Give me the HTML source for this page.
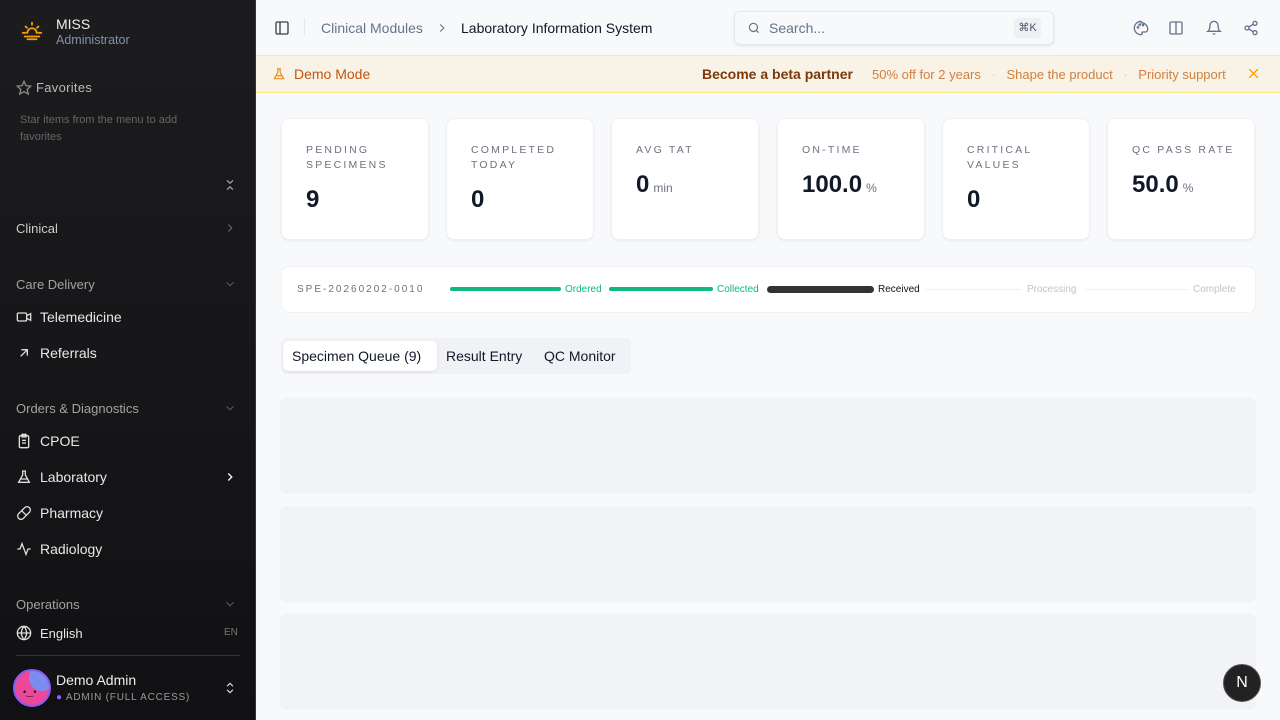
<!DOCTYPE html><html><head><style>
*{box-sizing:border-box;margin:0;padding:0}
body{width:1280px;height:720px;overflow:hidden;font-family:"Liberation Sans",sans-serif;background:#f8f9fb;position:relative}
.sb{position:absolute;left:0;top:0;width:256px;height:720px;background:linear-gradient(180deg,#1c1c1e,#111113);color:#e5e5e5;border-right:1px solid #333}
.a{position:absolute}
.sec{position:absolute;left:16px;font-size:13px;color:#a3a3a3}
.it{position:absolute;left:16px;font-size:14px;color:#e8e8e8;display:flex;align-items:center;gap:8px}
.it svg{width:16px;height:16px}
.cv{position:absolute;left:223px;width:14px;height:14px}
.card{position:absolute;top:118px;width:148px;height:122px;background:#fff;border-radius:8px;box-shadow:0 1px 2px rgba(0,0,0,.06);border:1px solid #eef0f3}
.lab{position:absolute;left:24px;top:24px;font-size:10.5px;letter-spacing:2.2px;color:#6b7280;line-height:15px}
.val{position:absolute;left:24px;font-size:24px;font-weight:bold;color:#111827}
.val small{font-size:12px;font-weight:normal;color:#6b7280;margin-left:4px}
.sk{position:absolute;left:280px;width:976px;height:96px;background:#f1f3f7;border-radius:6px}
.ico{position:absolute;top:20px;width:16px;height:16px}
</style></head><body>
<div class="sb">
<svg class="a" style="left:21px;top:20px" width="22" height="22" viewBox="0 0 24 24" fill="none" stroke="#f59e0b" stroke-width="2" stroke-linecap="round"><path d="M12 3v2M5 7l1.5 1.5M19 7l-1.5 1.5M2 14h3M19 14h3M7 14a5 5 0 0110 0M4 18h16M7 21h10"/></svg>
<div class="a" style="left:56px;top:16px;font-size:14px;color:#eee">MISS</div>
<div class="a" style="left:56px;top:33px;font-size:12.5px;color:#8391a7">Administrator</div>
<svg class="a" style="left:16px;top:80px" width="16" height="16" viewBox="0 0 24 24" fill="none" stroke="#888" stroke-width="2"><path d="M12 2l3 6.5 7 .8-5.2 4.8 1.5 7-6.3-3.6-6.3 3.6 1.5-7L2 9.3l7-.8z"/></svg>
<div class="a" style="left:36px;top:80px;font-size:13px;color:#bbb;letter-spacing:.3px">Favorites</div>
<div class="a" style="left:20px;top:112px;font-size:11px;color:#666;line-height:17px;width:200px">Star items from the menu to add favorites</div>
<svg class="cv" style="top:178px" viewBox="0 0 24 24" fill="none" stroke="#aaa" stroke-width="2"><path d="M7 4l5 5 5-5M7 20l5-5 5 5"/></svg>
<div class="sec" style="top:221px;color:#ccc">Clinical</div>
<svg class="cv" style="top:221px" viewBox="0 0 24 24" fill="none" stroke="#666" stroke-width="2"><path d="M9 6l6 6-6 6"/></svg>
<div class="sec" style="top:277px">Care Delivery</div>
<svg class="cv" style="top:277px" viewBox="0 0 24 24" fill="none" stroke="#555" stroke-width="2"><path d="M6 9l6 6 6-6"/></svg>
<div class="it" style="top:309px"><svg viewBox="0 0 24 24" fill="none" stroke="#ddd" stroke-width="2"><rect x="2" y="6" width="14" height="12" rx="2"/><path d="M16 10l6-3v10l-6-3"/></svg>Telemedicine</div>
<div class="it" style="top:345px"><svg viewBox="0 0 24 24" fill="none" stroke="#ddd" stroke-width="2"><path d="M7 17L17 7M8 7h9v9"/></svg>Referrals</div>
<div class="sec" style="top:401px">Orders &amp; Diagnostics</div>
<svg class="cv" style="top:401px" viewBox="0 0 24 24" fill="none" stroke="#555" stroke-width="2"><path d="M6 9l6 6 6-6"/></svg>
<div class="it" style="top:433px"><svg viewBox="0 0 24 24" fill="none" stroke="#ddd" stroke-width="2"><rect x="5" y="4" width="14" height="18" rx="2"/><path d="M9 2h6v4H9zM9 11h6M9 15h6"/></svg>CPOE</div>
<div class="it" style="top:469px"><svg viewBox="0 0 24 24" fill="none" stroke="#ddd" stroke-width="2"><path d="M9 3h6M10 3v6L4 20h16L14 9V3M7 15h10"/></svg>Laboratory</div>
<svg class="cv" style="top:470px" viewBox="0 0 24 24" fill="none" stroke="#eee" stroke-width="2.5"><path d="M9 6l6 6-6 6"/></svg>
<div class="it" style="top:505px"><svg viewBox="0 0 24 24" fill="none" stroke="#ddd" stroke-width="2"><path d="M10.5 20.5a5 5 0 01-7-7l10-10a5 5 0 017 7zM8.5 8.5l7 7"/></svg>Pharmacy</div>
<div class="it" style="top:541px"><svg viewBox="0 0 24 24" fill="none" stroke="#ddd" stroke-width="2"><path d="M2 12h4l3-8 6 16 3-8h4"/></svg>Radiology</div>
<div class="sec" style="top:597px">Operations</div>
<svg class="cv" style="top:597px" viewBox="0 0 24 24" fill="none" stroke="#555" stroke-width="2"><path d="M6 9l6 6 6-6"/></svg>
<div class="it" style="top:625px;font-size:13px"><svg viewBox="0 0 24 24" fill="none" stroke="#ddd" stroke-width="2"><circle cx="12" cy="12" r="10"/><path d="M2 12h20M12 2a15 15 0 010 20M12 2a15 15 0 000 20"/></svg>English</div>
<div class="a" style="left:224px;top:627px;font-size:10px;color:#777">EN</div>
<div class="a" style="left:16px;top:655px;width:224px;height:1px;background:#333"></div>
<div class="a" style="left:13px;top:669px;width:38px;height:38px;border-radius:50%;border:2px solid #8b5cf6;background:#ec4899;overflow:hidden"><div style="position:absolute;right:-6px;top:-6px;width:26px;height:26px;border-radius:50%;background:#7c8cf0"></div><div style="position:absolute;left:8px;top:16px;font-size:9px;color:#111">•‿•</div></div>
<div class="a" style="left:56px;top:672px;font-size:14px;color:#eee">Demo Admin</div>
<div class="a" style="left:56px;top:692px;font-size:10px;color:#999;letter-spacing:.8px"><span style="color:#8b5cf6">●</span> ADMIN (FULL ACCESS)</div>
<svg class="cv" style="top:681px" viewBox="0 0 24 24" fill="none" stroke="#ddd" stroke-width="2"><path d="M7 9l5-5 5 5M7 15l5 5 5-5"/></svg>
</div>
<div class="a" style="left:256px;top:0;width:1024px;height:56px;border-bottom:1px solid #e5e7eb;background:#f8f9fb"></div>
<svg class="a" style="left:274px;top:20px" width="16" height="16" viewBox="0 0 24 24" fill="none" stroke="#374151" stroke-width="2"><rect x="3" y="3" width="18" height="18" rx="2"/><path d="M9 3v18"/></svg>
<div class="a" style="left:304px;top:18px;width:1px;height:18px;background:#e5e7eb"></div>
<div class="a" style="left:321px;top:20px;font-size:14px;color:#64748b">Clinical Modules</div>
<svg class="a" style="left:435px;top:21px" width="14" height="14" viewBox="0 0 24 24" fill="none" stroke="#64748b" stroke-width="2"><path d="M9 6l6 6-6 6"/></svg>
<div class="a" style="left:461px;top:20px;font-size:14px;color:#111827">Laboratory Information System</div>
<div class="a" style="left:734px;top:11px;width:320px;height:34px;background:#f8f9fb;border:1px solid #e5e7eb;border-radius:6px;box-shadow:0 1px 3px rgba(0,0,0,.08)"></div>
<svg class="a" style="left:747px;top:21px" width="14" height="14" viewBox="0 0 24 24" fill="none" stroke="#64748b" stroke-width="2"><circle cx="11" cy="11" r="7"/><path d="M20 20l-4-4"/></svg>
<div class="a" style="left:769px;top:20px;font-size:14px;color:#64748b">Search...</div>
<div class="a" style="left:1014px;top:18px;width:27px;height:20px;background:#eef0f4;border-radius:3px;font-size:11px;color:#475569;text-align:center;line-height:20px">⌘K</div>
<svg class="ico" style="left:1133px" viewBox="0 0 24 24" fill="none" stroke="#64748b" stroke-width="2"><path d="M12 2a10 10 0 000 20c1.5 0 2-1 1.5-2s0-2 1.5-2H18a4 4 0 004-4c0-6-4.5-10-10-10z"/><circle cx="7.5" cy="11" r="1"/><circle cx="10" cy="7" r="1"/><circle cx="15" cy="7.5" r="1"/></svg>
<svg class="ico" style="left:1168px" viewBox="0 0 24 24" fill="none" stroke="#64748b" stroke-width="2"><rect x="3" y="3" width="18" height="18" rx="2"/><path d="M12 3v18"/></svg>
<svg class="ico" style="left:1206px" viewBox="0 0 24 24" fill="none" stroke="#64748b" stroke-width="2"><path d="M6 8a6 6 0 0112 0c0 7 3 9 3 9H3s3-2 3-9M10 21h4"/></svg>
<svg class="ico" style="left:1243px" viewBox="0 0 24 24" fill="none" stroke="#64748b" stroke-width="2"><circle cx="18" cy="5" r="3"/><circle cx="6" cy="12" r="3"/><circle cx="18" cy="19" r="3"/><path d="M8.6 13.5l6.8 4M15.4 6.5l-6.8 4"/></svg>
<div class="a" style="left:256px;top:56px;width:1024px;height:37px;background:#f9f2e7;border-bottom:1px solid #fde68a"></div>
<svg class="a" style="left:272px;top:66px" width="14" height="16" viewBox="0 0 24 24" fill="none" stroke="#ea8a1a" stroke-width="2"><path d="M9 3h6M10 3v6L4 20h16L14 9V3M7 15h10"/></svg>
<div class="a" style="left:294px;top:66px;font-size:14px;color:#c2570c">Demo Mode</div>
<div class="a" style="left:702px;top:66px;font-size:14px;font-weight:bold;color:#7c3a0b">Become a beta partner</div>
<div class="a" style="left:872px;top:67px;font-size:13px;color:#d08040">50% off for 2 years <span style="color:#f3c48a;margin:0 7px">·</span> Shape the product <span style="color:#f3c48a;margin:0 7px">·</span> Priority support</div>
<svg class="a" style="left:1247px;top:67px" width="13" height="13" viewBox="0 0 24 24" fill="none" stroke="#f59e0b" stroke-width="2.5"><path d="M4 4l16 16M20 4L4 20"/></svg>
<div class="card" style="left:281px"><div class="lab">PENDING<br>SPECIMENS</div><div class="val" style="top:67px">9</div></div>
<div class="card" style="left:446px"><div class="lab">COMPLETED<br>TODAY</div><div class="val" style="top:67px">0</div></div>
<div class="card" style="left:611px"><div class="lab">AVG TAT</div><div class="val" style="top:52px">0<small>min</small></div></div>
<div class="card" style="left:777px"><div class="lab">ON-TIME</div><div class="val" style="top:52px">100.0<small>%</small></div></div>
<div class="card" style="left:942px"><div class="lab">CRITICAL<br>VALUES</div><div class="val" style="top:67px">0</div></div>
<div class="card" style="left:1107px"><div class="lab">QC PASS RATE</div><div class="val" style="top:52px">50.0<small>%</small></div></div>
<div class="a" style="left:281px;top:266px;width:975px;height:47px;background:#fff;border-radius:8px;border:1px solid #eef0f3"></div>
<div class="a" style="left:297px;top:284px;font-size:10px;letter-spacing:2px;color:#6b7280">SPE-20260202-0010</div>
<div class="a" style="left:450px;top:287px;width:111px;height:4px;border-radius:2px;background:#10b981"></div>
<div class="a" style="left:565px;top:284px;font-size:10px;color:#10b981">Ordered</div>
<div class="a" style="left:609px;top:287px;width:104px;height:4px;border-radius:2px;background:#10b981"></div>
<div class="a" style="left:717px;top:284px;font-size:10px;color:#10b981">Collected</div>
<div class="a" style="left:767px;top:286px;width:107px;height:7px;border-radius:4px;background:#333"></div>
<div class="a" style="left:878px;top:284px;font-size:10px;color:#111">Received</div>
<div class="a" style="left:925px;top:289px;width:97px;height:1px;background:#eef0f4"></div>
<div class="a" style="left:1027px;top:284px;font-size:10px;color:#c0c4cc">Processing</div>
<div class="a" style="left:1085px;top:289px;width:103px;height:1px;background:#eef0f4"></div>
<div class="a" style="left:1193px;top:284px;font-size:10px;color:#c0c4cc">Complete</div>
<div class="a" style="left:281px;top:338px;width:350px;height:36px;background:#f0f2f6;border-radius:6px"></div>
<div class="a" style="left:283px;top:341px;width:154px;height:30px;background:#fff;border-radius:5px;box-shadow:0 1px 2px rgba(0,0,0,.1)"></div>
<div class="a" style="left:292px;top:348px;font-size:14px;color:#111827">Specimen Queue (9)</div>
<div class="a" style="left:446px;top:348px;font-size:14px;color:#111827">Result Entry</div>
<div class="a" style="left:544px;top:348px;font-size:14px;color:#111827">QC Monitor</div>
<div class="sk" style="top:398px"></div><div class="sk" style="top:506px"></div><div class="sk" style="top:614px"></div>
<div class="a" style="left:1223px;top:664px;width:38px;height:38px;border-radius:50%;background:#222;border:1px solid #555;color:#fff;font-size:16px;text-align:center;line-height:36px">N</div>
</body></html>
